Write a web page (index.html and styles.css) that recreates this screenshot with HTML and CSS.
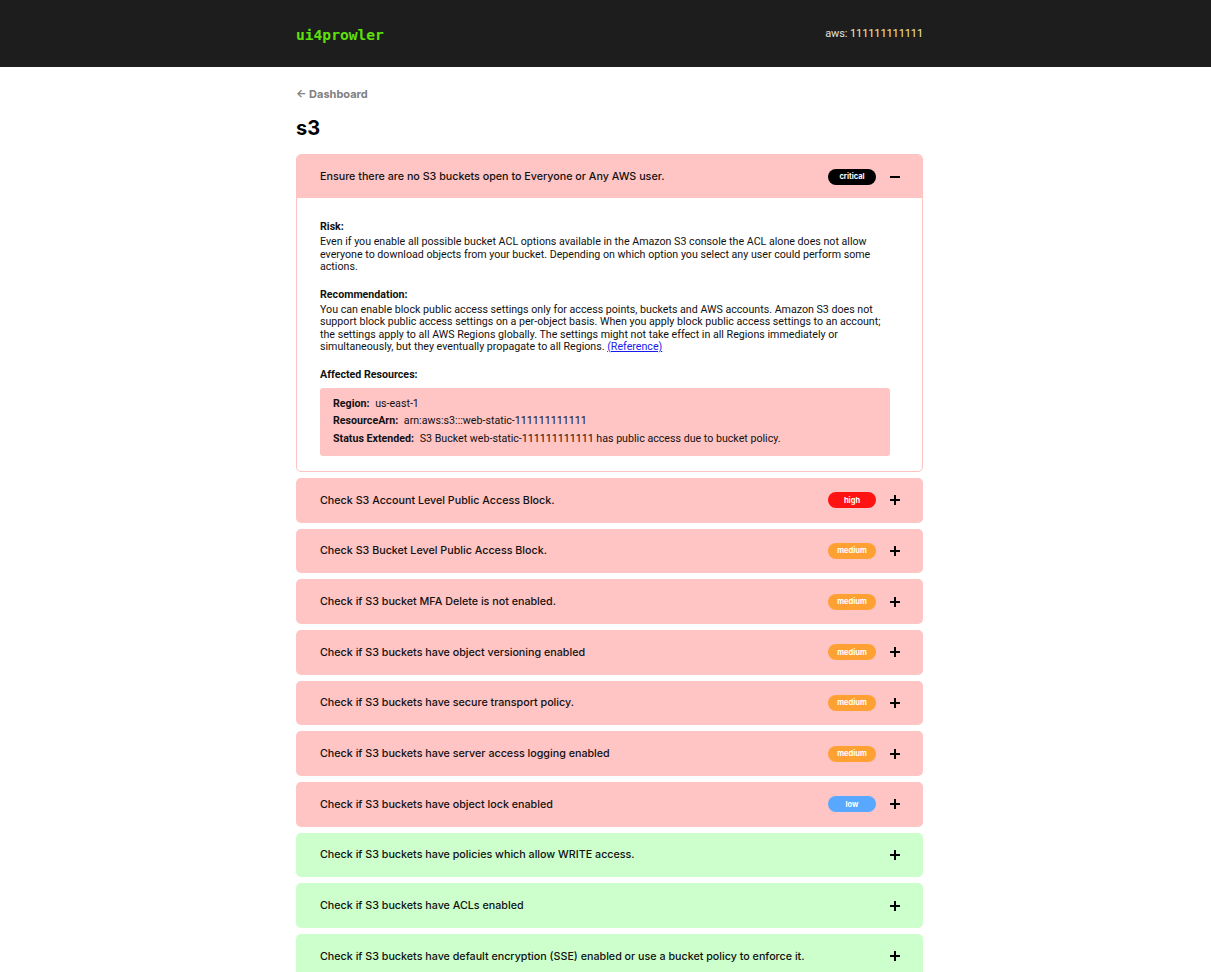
FILE: index.html
```html
<!DOCTYPE html>
<html lang="en">
<head>
<meta charset="utf-8">
<title>ui4prowler - s3</title>
<link rel="stylesheet" href="styles.css">
</head>
<body>
<header class="topbar">
  <div class="wrap topbar-inner">
    <span class="logo">ui4prowler</span>
    <span class="account">aws: <span class="account-id">111111111111</span></span>
  </div>
</header>
<main class="wrap">
  <a class="back" href="#">← Dashboard</a>
  <h1 class="title">s3</h1>
  <div class="list">
    <section class="item fail open">
      <div class="item-head">
        <span class="item-title">Ensure there are no S3 buckets open to Everyone or Any AWS user.</span>
        <span class="badge critical">critical</span>
        <svg class="toggle" viewBox="0 0 12 12" width="12" height="12"><path d="M1 6h10" stroke="#000" stroke-width="2"/></svg>
      </div>
      <div class="item-body">
        <h3 class="label">Risk:</h3>
        <p class="text">Even if you enable all possible bucket ACL options available in the Amazon S3 console the ACL alone does not allow everyone to download objects from your bucket. Depending on which option you select any user could perform some actions.</p>
        <h3 class="label">Recommendation:</h3>
        <p class="text">You can enable block public access settings only for access points, buckets and AWS accounts. Amazon S3 does not support block public access settings on a per-object basis. When you apply block public access settings to an account; the settings apply to all AWS Regions globally. The settings might not take effect in all Regions immediately or simultaneously, but they eventually propagate to all Regions. <a href="#" class="ref">(Reference)</a></p>
        <h3 class="label">Affected Resources:</h3>
        <div class="resource">
          <div class="res-row"><b>Region:</b> us-east-1</div>
          <div class="res-row"><b>ResourceArn:</b> arn:aws:s3:::web-static-111111111111</div>
          <div class="res-row"><b>Status Extended:</b> S3 Bucket web-static-111111111111 has public access due to bucket policy.</div>
        </div>
      </div>
    </section>
    <section class="item fail">
      <div class="item-head"><span class="item-title">Check S3 Account Level Public Access Block.</span><span class="badge high">high</span><svg class="toggle" viewBox="0 0 12 12" width="12" height="12"><path d="M1 6h10M6 1v10" stroke="#000" stroke-width="2"/></svg></div>
    </section>
    <section class="item fail">
      <div class="item-head"><span class="item-title">Check S3 Bucket Level Public Access Block.</span><span class="badge medium">medium</span><svg class="toggle" viewBox="0 0 12 12" width="12" height="12"><path d="M1 6h10M6 1v10" stroke="#000" stroke-width="2"/></svg></div>
    </section>
    <section class="item fail">
      <div class="item-head"><span class="item-title">Check if S3 bucket MFA Delete is not enabled.</span><span class="badge medium">medium</span><svg class="toggle" viewBox="0 0 12 12" width="12" height="12"><path d="M1 6h10M6 1v10" stroke="#000" stroke-width="2"/></svg></div>
    </section>
    <section class="item fail">
      <div class="item-head"><span class="item-title">Check if S3 buckets have object versioning enabled</span><span class="badge medium">medium</span><svg class="toggle" viewBox="0 0 12 12" width="12" height="12"><path d="M1 6h10M6 1v10" stroke="#000" stroke-width="2"/></svg></div>
    </section>
    <section class="item fail">
      <div class="item-head"><span class="item-title">Check if S3 buckets have secure transport policy.</span><span class="badge medium">medium</span><svg class="toggle" viewBox="0 0 12 12" width="12" height="12"><path d="M1 6h10M6 1v10" stroke="#000" stroke-width="2"/></svg></div>
    </section>
    <section class="item fail">
      <div class="item-head"><span class="item-title">Check if S3 buckets have server access logging enabled</span><span class="badge medium">medium</span><svg class="toggle" viewBox="0 0 12 12" width="12" height="12"><path d="M1 6h10M6 1v10" stroke="#000" stroke-width="2"/></svg></div>
    </section>
    <section class="item fail">
      <div class="item-head"><span class="item-title">Check if S3 buckets have object lock enabled</span><span class="badge low">low</span><svg class="toggle" viewBox="0 0 12 12" width="12" height="12"><path d="M1 6h10M6 1v10" stroke="#000" stroke-width="2"/></svg></div>
    </section>
    <section class="item pass">
      <div class="item-head"><span class="item-title">Check if S3 buckets have policies which allow WRITE access.</span><svg class="toggle" viewBox="0 0 12 12" width="12" height="12"><path d="M1 6h10M6 1v10" stroke="#000" stroke-width="2"/></svg></div>
    </section>
    <section class="item pass">
      <div class="item-head"><span class="item-title">Check if S3 buckets have ACLs enabled</span><svg class="toggle" viewBox="0 0 12 12" width="12" height="12"><path d="M1 6h10M6 1v10" stroke="#000" stroke-width="2"/></svg></div>
    </section>
    <section class="item pass">
      <div class="item-head"><span class="item-title">Check if S3 buckets have default encryption (SSE) enabled or use a bucket policy to enforce it.</span><svg class="toggle" viewBox="0 0 12 12" width="12" height="12"><path d="M1 6h10M6 1v10" stroke="#000" stroke-width="2"/></svg></div>
    </section>
  </div>
</main>
</body>
</html>
```
FILE: styles.css
```css
* { box-sizing: border-box; }
html, body { margin: 0; padding: 0; background: #fff; }
body { font-family: Inter, "Noto Sans", sans-serif; color: #111; }

.wrap { width: 635px; margin: 0 auto; padding-left: 8px; }

.topbar { background: #1d1d1d; height: 67px; }
.topbar-inner { height: 67px; display: flex; align-items: center; justify-content: space-between; }
.logo { font-family: "DejaVu Sans Mono", "Liberation Mono", monospace; font-weight: bold; font-size: 14.6px; color: #5ee10a; padding-top: 1px; }
.account { font-family: Roboto, sans-serif; font-size: 11px; color: #e0e0e0; letter-spacing: -0.1px; }
.account-id { color: #f5e9a8; }

.back { display: inline-block; margin-top: 20px; font-family: Inter, sans-serif; font-weight: 700; font-size: 11px; color: #808080; text-decoration: none; }
.title { margin: 14px 0 14px; font-family: Inter, sans-serif; font-weight: 700; font-size: 20px; line-height: 24px; color: #000; }

.list { display: flex; flex-direction: column; gap: 6px; }
.item { border-radius: 5px; overflow: hidden; }
.item.fail { background: #ffc4c4; }
.item.pass { background: #ccffcc; }
.item.open { background: #fff; border: 1px solid #fcc3c3; }

.item-head { display: flex; align-items: center; height: 44.67px; padding: 0 22px 0 24px; }
.item.open .item-head { height: 43px; background: #ffc4c4; padding-left: 23px; padding-right: 21px; }
.item-title { flex: 1; font-family: Inter, sans-serif; font-size: 10.72px; font-weight: 500; color: #111; }

.badge { width: 48px; height: 16px; border-radius: 8px; display: flex; align-items: center; justify-content: center; font-family: Inter, sans-serif; font-size: 7.5px; font-weight: 700; color: #fff; margin-right: 13px; }
.badge.critical { background: #000; }
.badge.high { background: #ff1212; }
.badge.medium { background: #ffa033; }
.badge.low { background: #58a8ff; }
.toggle { display: block; flex: none; }
.item.pass .toggle { margin-left: 61px; }

.item-body { padding: 22px 32px 15px 23px; font-family: Roboto, sans-serif; font-size: 10.67px; color: #111; }
.label { margin: 0; font-size: 10.67px; font-weight: 700; line-height: 13px; }
.text { margin: 3px 0 14px; line-height: 12.5px; }
.ref { color: #1a1aee; }
.resource { margin-top: 7px; background: #ffc4c4; border-radius: 3px; padding: 7px 13px 9px; }
.res-row { line-height: 17.5px; }
.res-row b { margin-right: 3px; }
```
